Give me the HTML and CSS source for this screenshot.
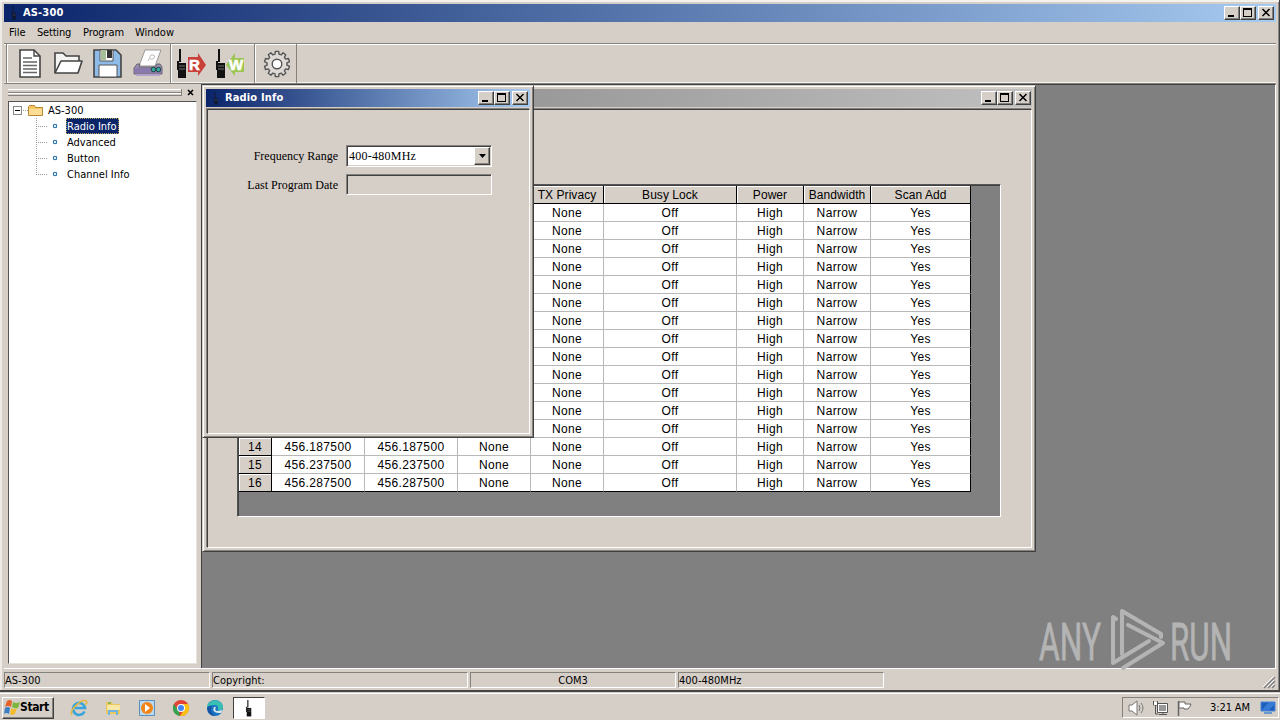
FILE: index.html
```html
<!DOCTYPE html>
<html lang="en">
<head>
    <meta charset="UTF-8">
    <title>AS-300</title>
    <link rel="stylesheet" href="styles.css">
</head>
<body>
    <svg class="defs" width="0" height="0">
        <symbol id="radio" viewBox="0 0 10 30">
            <path d="M3 0v13M1 12v9" stroke="#111" stroke-width="2" fill="none"/>
            <path d="M1 14h8v15H1z" fill="#111"/>
            <path d="M2 17h6M2 20h6" stroke="#707070"/>
        </symbol>
        <symbol id="min" viewBox="0 0 12 10"><path d="M2 7h6v2H2z"/></symbol>
        <symbol id="max" viewBox="0 0 12 10"><path d="M1 0h9v9H1zM2 2v6h7V2z" fill-rule="evenodd"/></symbol>
        <symbol id="close" viewBox="0 0 12 10"><path d="M2.500 1l7 7M9.500 1l-7 7" stroke="#000" stroke-width="1.5"/></symbol>
    </svg>

    <div class="app">
        <div class="titlebar main-title">
            <svg class="title-icon" width="10" height="14"><use href="#radio"/></svg>
            <span class="title-text">AS-300</span>
            <div class="controls">
                <button><svg><use href="#min"/></svg></button>
                <button><svg><use href="#max"/></svg></button>
                <button class="close"><svg><use href="#close"/></svg></button>
            </div>
        </div>
        <div class="menu">
            <span class="menu-file">File</span>
            <span class="menu-setting">Setting</span>
            <span class="menu-program">Program</span>
            <span>Window</span>
        </div>

        <div class="toolbar">
            <div class="tool-group files">
                <svg width="24" height="30" viewBox="0 0 24 30">
                    <path d="M2 1h14l6 6v21H2z" fill="#fff" stroke="#444" stroke-width="1.6"/>
                    <path d="M16 1v6h6" fill="none" stroke="#444" stroke-width="1.4"/>
                    <path d="M5 9h9M5 13h14M5 16.500h14M5 20h14M5 23.500h14" stroke="#666" stroke-width="1.3"/>
                </svg>
                <svg width="30" height="30" viewBox="0 0 30 30">
                    <path d="M2 24V4h8l3 3h13v5" fill="#f4f4f2" stroke="#444" stroke-width="1.6"/>
                    <path d="M2 24l6-12h21l-4 12z" fill="#fff" stroke="#444" stroke-width="1.6" stroke-linejoin="round"/>
                </svg>
                <svg width="30" height="30" viewBox="0 0 30 30">
                    <path d="M1 1h22l5 5v22H1z" fill="#8fbbe9" stroke="#444" stroke-width="1.6"/>
                    <path d="M7 1h13v11H7z" fill="#fff" stroke="#555"/>
                    <path d="M8 1h5v10H8z" fill="#a6bd98"/>
                    <path d="M14 1h5v8h-5z" fill="#333"/>
                    <path d="M6 16h18v12H6z" fill="#fff" stroke="#555"/>
                </svg>
                <svg width="32" height="30" viewBox="0 0 32 30">
                    <path d="M12 1h16l-6 16H6z" fill="#fff" stroke="#999"/>
                    <path d="M15 12l3-6h3q2 2-1 4h-3" fill="none" stroke="#bbb"/>
                    <path d="M4 15h3l-1 3h16l2-3h3l2 3v7H1v-6z" fill="#9a8cb8" stroke="#666"/>
                    <path d="M1 19h28v5H1z" fill="#8979ad"/>
                    <path d="M3 26h24" stroke="#b0a2cc" stroke-width="2"/>
                    <circle cx="20.500" cy="20.500" r="2.300" fill="#36a69d" stroke="#244"/>
                    <circle cx="25.500" cy="20.500" r="2.300" fill="#36a69d" stroke="#244"/>
                </svg>
            </div>
            <div class="tool-group radios">
                <svg width="30" height="32" viewBox="0 0 30 32">
                    <path d="M12 9h10V5l8 12-8 11v-4H12z" fill="#c9403b"/>
                    <text x="13" y="22" class="arrow-letter">R</text>
                    <use href="#radio" x="1" y="1" width="10" height="30"/>
                </svg>
                <svg width="30" height="32" viewBox="0 0 30 32">
                    <path d="M29 10h-9V5l-9 12 9 11v-4h9z" fill="#9cc653"/>
                    <text x="14" y="22" class="arrow-letter">W</text>
                    <use href="#radio" x="1" y="1" width="10" height="30"/>
                </svg>
            </div>
            <div class="tool-group gear">
                <svg width="28" height="28" viewBox="-14 -14 28 28">
                    <path id="gear" fill="#dedbd6" stroke="#555" stroke-width="1.4" stroke-linejoin="round"/>
                    <circle r="4.800" fill="#fff" stroke="#555" stroke-width="1.400"/>
                </svg>
            </div>
        </div>

        <div class="workspace">
            <div class="sidebar">
                <div class="gripper"><i></i><svg width="7" height="7" viewBox="0 0 7 7"><path d="M1 1l5 5M6 1L1 6" stroke="#000" stroke-width="1.600"/></svg></div>
                <div class="tree">
                    <div class="root">
                        <svg width="35" height="16" viewBox="0 0 35 16">
                            <rect x="4.500" y="4.500" width="8" height="8" fill="#fff" stroke="#888"/>
                            <path d="M6 8.500h5" stroke="#000"/>
                            <path d="M14 8.500h5" stroke="#999" stroke-dasharray="1 1"/>
                            <path d="M19.500 4.500l1-1h5l1 2h7v8h-14z" fill="#f7c765" stroke="#b88736"/>
                            <path d="M20 7h13v6H20z" fill="#fbdd93"/>
                        </svg>
                        <span>AS-300</span>
                    </div>
                    <div class="items">
                        <div class="item"><i></i><span class="selected">Radio Info</span></div>
                        <div class="item"><i></i><span>Advanced</span></div>
                        <div class="item"><i></i><span>Button</span></div>
                        <div class="item"><i></i><span>Channel Info</span></div>
                    </div>
                </div>
            </div>

            <div class="mdi">
                <div class="child channel-window">
                    <div class="titlebar inactive">
                        <div class="controls">
                            <button><svg><use href="#min"/></svg></button>
                            <button><svg><use href="#max"/></svg></button>
                            <button class="close"><svg><use href="#close"/></svg></button>
                        </div>
                    </div>
                    <div class="client">
                        <div class="grid-box"><div class="grid" id="grid"></div></div>
                    </div>
                </div>

                <div class="child radio-window">
                    <div class="titlebar">
                        <svg class="title-icon" width="10" height="13"><use href="#radio"/></svg>
                        <span class="title-text">Radio Info</span>
                        <div class="controls">
                            <button><svg><use href="#min"/></svg></button>
                            <button><svg><use href="#max"/></svg></button>
                            <button class="close"><svg><use href="#close"/></svg></button>
                        </div>
                    </div>
                    <div class="client form">
                        <div class="field">
                            <label>Frequency Range</label>
                            <div class="combo"><span>400-480MHz</span><b><svg width="7" height="4"><path d="M0 0h7L3.500 4z"/></svg></b></div>
                        </div>
                        <div class="field">
                            <label class="label-date">Last Program Date</label>
                            <div class="combo disabled"></div>
                        </div>
                    </div>
                </div>

                <svg class="watermark" width="238" height="66" viewBox="0 0 238 66">
                    <text x="3" y="54" textLength="62" lengthAdjust="spacingAndGlyphs">ANY</text>
                    <g fill="none" stroke="#b4b4b4" stroke-width="4" stroke-linejoin="round" stroke-linecap="round">
                        <path d="M80 13L77 11V57L113 35"/>
                        <path d="M86 48V5L125 28V31"/>
                        <path d="M92 19L127 37L87 62"/>
                    </g>
                    <text x="134" y="54" textLength="62" lengthAdjust="spacingAndGlyphs">RUN</text>
                </svg>
            </div>
        </div>

        <div class="status">
            <span class="s1">AS-300</span>
            <span class="s2">Copyright:</span>
            <span class="s3">COM3</span>
            <span class="s4">400-480MHz</span>
            <svg width="14" height="14" viewBox="0 0 14 14"><path d="M2 13L13 2M6 13l7-7M10 13l3-3" stroke="#808080" stroke-width="1.500"/><path d="M1 12L12 1M5 12l7-7M9 12l3-3" stroke="#fff"/></svg>
        </div>
    </div>

    <div class="taskbar">
        <div class="start">
            <svg width="16" height="16" viewBox="0 0 16 16">
                <path d="M3 1q3-2 5 0L7 7Q4 5 1 7z" fill="#e5622b"/>
                <path d="M9 2q3 2 7 0l-2 6q-3 1-6-1z" fill="#7cb83e"/>
                <path d="M1 8q3-2 5 0l-1 6q-3-2-5 0z" fill="#3b7fc9"/>
                <path d="M7 8q3 2 6 0l-2 6q-3 2-5 0z" fill="#f4bd31"/>
            </svg>
            <span>Start</span>
        </div>
        <div class="quick">
            <svg width="18" height="18" viewBox="0 0 18 18">
                <path d="M14.500 12.500A6 6 0 1 1 15 9H5" fill="none" stroke="#37a4dc" stroke-width="2.600"/>
                <path d="M2 16C-2 12 12-1 16 2q2 1-1 4" fill="none" stroke="#e6b73c" stroke-width="1.500"/>
            </svg>
            <svg width="18" height="18" viewBox="0 0 18 18">
                <path d="M2 3h6l1 2h7v10H2z" fill="#ecc75b"/>
                <path d="M3 6h13v5H3z" fill="#f9e8a5"/>
                <path d="M4 16v-5h10v5h-2v-3H6v3z" fill="#6db4e1"/>
                <path d="M4 4h3" stroke="#3da14b"/>
            </svg>
            <svg width="18" height="18" viewBox="0 0 18 18">
                <path d="M1.500 1.500h15v15h-15z" fill="#bcd9ef" stroke="#5a8fbd"/>
                <circle cx="9" cy="9" r="6" fill="#f08519"/>
                <path d="M7 5l5 4-5 4z" fill="#fff"/>
            </svg>
            <svg width="18" height="18" viewBox="0 0 18 18">
                <circle cx="9" cy="9" r="8" fill="#e14335"/>
                <path d="M2 5l5 8 1 4A8 8 0 0 1 2 5z" fill="#34a350"/>
                <path d="M9 5h7a8 8 0 0 1-8 12l4-6z" fill="#fbc116"/>
                <circle cx="9" cy="9" r="4" fill="#fff"/><circle cx="9" cy="9" r="3" fill="#4285f4"/>
            </svg>
            <svg width="18" height="18" viewBox="0 0 18 18">
                <circle cx="9" cy="9" r="8" fill="#1875c5"/>
                <path d="M1 9C2-1 16-1 17 8q0 4-5 3 1-5-4-5-5 0-7 3z" fill="#38bfb1"/>
                <path d="M8 8q-3 6 7 6l2-3-6 1q-3-1-1-4z" fill="#dce8e8"/>
                <path d="M6 7q-3 5 3 10-7 0-8-8 2-3 5-2z" fill="#1456a3"/>
            </svg>
        </div>
        <div class="task"><svg width="10" height="17"><use href="#radio"/></svg></div>
        <div class="tray">
            <svg width="17" height="16" viewBox="0 0 17 16"><path d="M1 5h3l5-4v14l-5-4H1z" fill="#fff" stroke="#777"/><path d="M11 5q2 3 0 6M13 3q4 5 0 10" fill="none" stroke="#777"/></svg>
            <svg width="17" height="16" viewBox="0 0 17 16">
                <path d="M5.500 3.500h10v9h-10z" fill="#fff" stroke="#555"/>
                <path d="M7 5h7v6H7z" fill="#999"/>
                <path d="M7 14.500h8M11 12v3" stroke="#555"/>
                <path d="M1.500 1v4h4V1M3.500 5v9h3" fill="none" stroke="#555"/>
                <path d="M2 2h3v3H2z" fill="#fff"/>
            </svg>
            <svg width="17" height="16" viewBox="0 0 17 16"><path d="M2.500 1v15" stroke="#666" stroke-width="1.500"/><path d="M3 2h6v2h6q-1 3-3 5H8V8H3z" fill="#fff" stroke="#666"/></svg>
            <span>3:21 AM</span>
            <svg class="desktop-icon" width="16" height="14" viewBox="0 0 16 14"><path d="M1 1h14v9H1z" fill="#1f5ebc" stroke="#4687d5"/><path d="M1 10L9 1h6v2L8 10z" fill="#387bd7"/><path d="M4 12h8" stroke="#6a9bcf" stroke-width="2"/></svg>
        </div>
    </div>

    <script>
        const headers = ['', '', '', '', 'TX Privacy', 'Busy Lock', 'Power', 'Bandwidth', 'Scan Add'];
        const channels = {
            14: ['456.187500', '456.187500', 'None'],
            15: ['456.237500', '456.237500', 'None'],
            16: ['456.287500', '456.287500', 'None']
        };
        const grid = document.getElementById('grid');

        function addCell(text, className) {
            const cell = document.createElement('div');
            cell.className = className;
            cell.textContent = text;
            grid.appendChild(cell);
        }

        headers.forEach(text => addCell(text, 'head'));
        for (let i = 1; i <= 16; i++) {
            const channel = channels[i];
            addCell(channel ? i : '', 'head number');
            (channel || ['', '', '']).concat(['None', 'Off', 'High', 'Narrow', 'Yes'])
                .forEach(text => addCell(text, 'cell'));
        }

        // ten teeth round the hub
        let d = '';
        for (let i = 0; i < 10; i++) {
            [[-0.2, 10], [-0.13, 12.7], [0.13, 12.7], [0.2, 10]].forEach(([offset, r]) => {
                const a = i * Math.PI / 5 + offset;
                d += (d ? 'L' : 'M') + (r * Math.sin(a)).toFixed(2) + ' ' + (-r * Math.cos(a)).toFixed(2);
            });
        }
        document.getElementById('gear').setAttribute('d', d + 'Z');
    </script>
</body>
</html>
```
FILE: styles.css
```css
* {
    box-sizing: border-box;
}

body {
    margin: 0;
    width: 1280px;
    height: 720px;
    overflow: hidden;
    background: #d6cfc8;
    font-family: "DejaVu Sans Condensed", "DejaVu Sans", sans-serif;
    font-stretch: condensed;
    font-size: 11px;
    color: #000;
}

svg {
    display: block;
    flex-shrink: 0;
}

.defs {
    position: absolute;
}

.app {
    height: 692px;
    padding: 4px 3px 0 4px;
    border-right: 1px solid #404040;
    border-bottom: 2px solid #484644;
    box-shadow: inset 0 2px #f4f2ee, inset 2px 0 #eeebe6, inset -1px 0 #888;
}

.titlebar {
    display: flex;
    align-items: center;
    height: 18px;
    padding: 0 2px 0 5px;
    background: linear-gradient(90deg, #0a246a, #a6caf0);
    color: #fff;
    font-weight: bold;
}

.title-icon {
    opacity: 0.65;
    margin-right: 4px;
}

.title-text {
    line-height: 18px;
    letter-spacing: 0.15px;
}

.controls {
    display: flex;
    margin-left: auto;
}

.controls button {
    width: 16px;
    height: 14px;
    padding: 1px;
    background: #d6cfc8;
    border: 1px solid;
    border-color: #fff #404040 #404040 #fff;
    box-shadow: inset -1px -1px #808080;
}

.controls button svg {
    width: 12px;
    height: 10px;
}

.controls .close {
    margin-left: 2px;
}

.menu {
    display: flex;
    height: 21px;
    padding-left: 5px;
    line-height: 21px;
}

.menu-file {
    width: 28px;
}

.menu-setting {
    width: 46px;
    letter-spacing: -0.2px;
}

.menu-program {
    width: 52px;
    letter-spacing: -0.1px;
}

.toolbar {
    display: flex;
    height: 41px;
    padding-left: 2px;
    border-top: 1px solid #85817c;
    border-bottom: 1px solid #85817c;
    box-shadow: inset 0 1px #fff, inset 0 -1px #f5f3ef;
}

.tool-group {
    display: flex;
    align-items: center;
    border-right: 1px solid #85817c;
    box-shadow: inset 1px 0 #fff;
}

.files {
    width: 165px;
    padding-left: 11px;
    gap: 10px;
    border-left: 1px solid #85817c;
}

.files svg:nth-child(2) {
    margin-left: 1px;
}

.radios {
    width: 84px;
    padding-left: 5px;
    gap: 9px;
}

.gear {
    width: 42px;
    padding-left: 8px;
}

.arrow-letter {
    font: bold 15px "Liberation Sans", sans-serif;
    fill: #fff;
    stroke: #fff;
    stroke-width: 0.6px;
}

.workspace {
    display: flex;
    height: 585px;
    border-bottom: 1px solid #fff;
}

.sidebar {
    width: 197px;
    padding: 4px 4px 4px 4px;
}

.gripper {
    display: flex;
    gap: 5px;
    height: 13px;
}

.gripper i {
    width: 174px;
    height: 7px;
    margin-top: 1px;
    border: solid #85817c;
    border-width: 0 1px 1px 0;
    background: linear-gradient(#fff 1px, transparent 1px 3px, #85817c 3px 4px, #fff 4px 5px, transparent 5px);
}

.gripper svg {
    margin-top: 1px;
}

.tree {
    height: 563px;
    background: #fff;
    border: 1px solid;
    border-color: #555 #e5e1db #e5e1db #555;
}

.root,
.item {
    display: flex;
    height: 16px;
    line-height: 17px;
}

.root span {
    margin-left: 4px;
}

.items {
    margin-left: 27px;
    background: linear-gradient(#999 50%, transparent 50%) 0 0 / 1px 2px repeat-y;
    height: 57px;
}

.item i {
    width: 30px;
    background: radial-gradient(circle at 19px 8px, #d9f2ff 0 1px, #3979aa 1.5px 2px, transparent 2.6px),
        linear-gradient(90deg, #999 50%, transparent 50%) 0 8px / 2px 1px repeat-x;
    background-size: auto, 2px 1px;
    border-right: 18px solid transparent;
    background-clip: border-box, padding-box;
    background-origin: border-box;
}

.item span {
    height: 16px;
    line-height: 17px;
    padding: 0 1px;
}

.item .selected {
    padding-right: 2px;
    background: #0a246a;
    color: #fff;
    outline: 1px dotted #bba75f;
    outline-offset: -1px;
}

.mdi {
    position: relative;
    flex: 1;
    background: #808080;
    border: solid;
    border-width: 1px 1px 0 1px;
    border-color: #404040 #fff #fff #404040;
}

.child {
    position: absolute;
    display: flex;
    flex-direction: column;
    padding: 3px;
    background: #d6cfc8;
    border: 1px solid;
    border-color: #d6cfc8 #404040 #404040 #d6cfc8;
    box-shadow: inset 1px 1px #fff, inset -1px -1px #85817c;
}

/* overlapping document windows */
.channel-window {
    left: 0;
    top: 0;
    width: 834px;
    height: 467px;
}

.radio-window {
    left: 0;
    top: 0;
    width: 332px;
    height: 353px;
}

.child .titlebar {
    margin-bottom: 2px;
}

.child .titlebar.inactive {
    padding-right: 1px;
    background: linear-gradient(90deg, #808080, #c0c0c0);
}

.client {
    flex: 1;
    margin-left: 1px;
    border: 1px solid;
    border-color: #404040 #fff #fff #404040;
    box-shadow: -1px -1px #85817c;
}

.channel-window .client {
    padding: 74px 0 0 29px;
}

.grid-box {
    width: 764px;
    height: 333px;
    padding: 1px 0 0 1px;
    background: #808080;
    border: 1px solid;
    border-color: #555 #fff #fff #555;
    box-shadow: inset 1px 1px #404040;
}

.grid {
    display: grid;
    grid-template-columns: 33px 93px 93px 73px 73px 133px 67px 67px 100px;
    grid-auto-rows: 18px;
    width: 732px;
    font-family: "Liberation Sans", Arial, sans-serif;
    font-size: 12px;
    letter-spacing: 0.35px;
    text-align: center;
}

.head,
.cell {
    line-height: 18px;
    white-space: nowrap;
    border-right: 1px solid #b8b8b8;
    border-bottom: 1px solid #b8b8b8;
}

.head {
    background: #d6cfc8;
    border-color: #000;
    box-shadow: inset 1px 1px #fff;
    letter-spacing: 0.05px;
}

.number {
    letter-spacing: 0.35px;
}

.cell {
    background: #fff;
}

.cell:nth-child(9n) {
    border-right-color: #000;
}

.cell:nth-last-child(-n+8) {
    border-bottom-color: #000;
}

.form {
    padding: 35px 0 0 39px;
    font-family: "Liberation Serif", "Times New Roman", serif;
    font-size: 12px;
}

.field {
    display: flex;
    height: 29px;
}

.field label {
    width: 92px;
    padding-right: 1px;
    line-height: 23px;
    text-align: right;
    white-space: nowrap;
}

.combo {
    display: flex;
    justify-content: space-between;
    width: 146px;
    height: 22px;
    margin-left: 7px;
    padding: 1px;
    background: #fff;
    border: 1px solid;
    border-color: #85817c #fff #fff #85817c;
    box-shadow: inset 1px 1px #404040, inset -1px -1px #d6cfc8;
    line-height: 19px;
}

.combo span {
    padding-left: 1px;
    letter-spacing: 0.25px;
}

.combo b {
    display: flex;
    align-items: center;
    justify-content: center;
    width: 16px;
    background: #d6cfc8;
    border: 1px solid;
    border-color: #fff #404040 #404040 #fff;
    box-shadow: inset -1px -1px #85817c;
}

.combo.disabled {
    height: 21px;
    background: #d6cfc8;
}

/* logo laid over the workspace edge */
.watermark {
    position: absolute;
    left: 834px;
    top: 521px;
}

.watermark text {
    font: 400 51px Roboto, sans-serif;
    fill: #b4b4b4;
    stroke: #b4b4b4;
    stroke-width: 0.8px;
}

.status {
    display: flex;
    height: 21px;
    padding-top: 3px;
    line-height: 15px;
}

.status span {
    height: 16px;
    padding-left: 0;
    border: 1px solid;
    border-color: #85817c #fff #fff #85817c;
    margin-right: 2px;
}

.s1 {
    width: 206px;
}

.s2 {
    width: 256px;
}

.s3 {
    width: 206px;
    text-align: center;
}

.s4 {
    width: 206px;
}

.status svg {
    margin: 3px 0 0 auto;
}

.taskbar {
    display: flex;
    height: 28px;
    padding-top: 4px;
    border-top: 1px solid #d6cfc8;
    box-shadow: inset 0 1px #fff;
}

.start {
    display: flex;
    align-items: center;
    width: 52px;
    height: 22px;
    margin-left: 2px;
    padding-left: 1px;
    border: 1px solid;
    border-color: #fff #404040 #404040 #fff;
    box-shadow: inset -1px -1px #85817c;
    font-size: 12px;
    font-weight: bold;
}

.start span {
    margin-top: -2px;
    letter-spacing: -0.4px;
}

.quick {
    display: flex;
    align-items: center;
    gap: 16px;
    width: 179px;
    height: 22px;
    padding-left: 16px;
}

.quick svg {
    margin-top: -1px;
}

.task {
    display: flex;
    align-items: center;
    justify-content: center;
    width: 32px;
    height: 22px;
    background: #fff;
    border: 1px solid;
    border-color: #404040 #fff #fff #404040;
}

.tray {
    display: flex;
    align-items: center;
    gap: 7px;
    width: 157px;
    height: 21px;
    margin-left: auto;
    margin-right: 1px;
    padding-left: 5px;
    border: 1px solid;
    border-color: #85817c #fff #fff #85817c;
}

.tray span {
    margin-left: 10px;
    white-space: nowrap;
    letter-spacing: -0.1px;
}

.desktop-icon {
    margin-left: 3px;
}
```
